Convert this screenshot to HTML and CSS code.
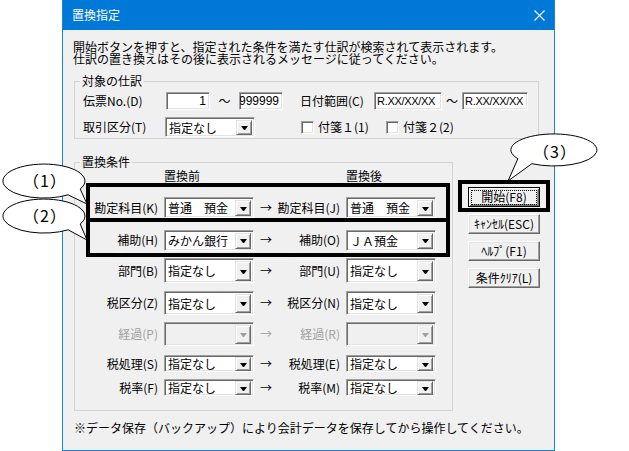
FILE: index.html
```html
<!DOCTYPE html>
<html lang="ja">
<head>
<meta charset="utf-8">
<title>置換指定</title>
<link rel="stylesheet" href="styles.css">
</head>
<body>
<div class="window">
  <div class="titlebar">
    <span class="title">置換指定</span>
    <svg class="close" width="11" height="11" viewBox="0 0 11 11"><path d="M0.5 0.5 L10.5 10.5 M10.5 0.5 L0.5 10.5" stroke="#fff" stroke-width="1.1" fill="none"/></svg>
  </div>
  <div class="client">
    <p class="desc">開始ボタンを押すと、指定された条件を満たす仕訳が検索されて表示されます。<br>仕訳の置き換えはその後に表示されるメッセージに従ってください。</p>

    <fieldset class="group group-target">
      <legend>対象の仕訳</legend>
      <div class="trow">
        <span class="lbl lbl-denpyo">伝票No.(D)</span>
        <span class="edit edit-no">1</span>
        <span class="tilde tilde-no">～</span>
        <span class="edit edit-no">999999</span>
        <span class="lbl lbl-date">日付範囲(C)</span>
        <span class="edit edit-date">R.XX/XX/XX</span>
        <span class="tilde tilde-date">～</span>
        <span class="edit edit-date2">R.XX/XX/XX</span>
      </div>
      <div class="trow">
        <span class="lbl lbl-torihiki">取引区分(T)</span>
        <span class="combo combo-20"><span class="ctext">指定なし</span><span class="cbtn"></span></span>
        <label class="check check-1"><span class="box"></span>付箋１(1)</label>
        <label class="check"><span class="box"></span>付箋２(2)</label>
      </div>
    </fieldset>

    <div class="main">
      <fieldset class="group group-cond">
        <legend>置換条件</legend>
        <div class="cond-grid">
          <span></span><span class="head">置換前</span><span></span><span></span><span class="head">置換後</span>

          <span class="rl">勘定科目(K)</span>
          <span class="combo combo-21"><span class="ctext">普通　預金</span><span class="cbtn"></span></span>
          <span class="arrow">→</span>
          <span class="rl">勘定科目(J)</span>
          <span class="combo combo-21"><span class="ctext">普通　預金</span><span class="cbtn"></span></span>

          <span class="rl">補助(H)</span>
          <span class="combo combo-21"><span class="ctext">みかん銀行</span><span class="cbtn"></span></span>
          <span class="arrow">→</span>
          <span class="rl">補助(O)</span>
          <span class="combo combo-21"><span class="ctext">ＪＡ預金</span><span class="cbtn"></span></span>

          <span class="rl">部門(B)</span>
          <span class="combo combo-25"><span class="ctext">指定なし</span><span class="cbtn"></span></span>
          <span class="arrow">→</span>
          <span class="rl">部門(U)</span>
          <span class="combo combo-25"><span class="ctext">指定なし</span><span class="cbtn"></span></span>

          <span class="rl">税区分(Z)</span>
          <span class="combo combo-24"><span class="ctext">指定なし</span><span class="cbtn"></span></span>
          <span class="arrow">→</span>
          <span class="rl">税区分(N)</span>
          <span class="combo combo-24"><span class="ctext">指定なし</span><span class="cbtn"></span></span>

          <span class="rl disabled">経過(P)</span>
          <span class="combo combo-24 combo-disabled"><span class="ctext"></span><span class="cbtn"></span></span>
          <span class="arrow disabled">→</span>
          <span class="rl disabled">経過(R)</span>
          <span class="combo combo-24 combo-disabled"><span class="ctext"></span><span class="cbtn"></span></span>

          <span class="rl">税処理(S)</span>
          <span class="combo combo-17"><span class="ctext">指定なし</span><span class="cbtn"></span></span>
          <span class="arrow">→</span>
          <span class="rl">税処理(E)</span>
          <span class="combo combo-17"><span class="ctext">指定なし</span><span class="cbtn"></span></span>

          <span class="rl">税率(F)</span>
          <span class="combo combo-17"><span class="ctext">指定なし</span><span class="cbtn"></span></span>
          <span class="arrow">→</span>
          <span class="rl">税率(M)</span>
          <span class="combo combo-17"><span class="ctext">指定なし</span><span class="cbtn"></span></span>
        </div>
      </fieldset>

      <div class="buttons">
        <button class="btn btn-default"><span class="focus">開始(F8)</span></button>
        <button class="btn">ｷｬﾝｾﾙ(ESC)</button>
        <button class="btn">ﾍﾙﾌﾟ(F1)</button>
        <button class="btn">条件ｸﾘｱ(L)</button>
      </div>
    </div>

    <p class="note">※データ保存（バックアップ）により会計データを保存してから操作してください。</p>
  </div>
</div>

<svg class="annot" width="629" height="451" viewBox="0 0 629 451">
  <rect x="88" y="185" width="360" height="35" fill="none" stroke="#000" stroke-width="4"/>
  <rect x="88" y="220" width="360" height="35" fill="none" stroke="#000" stroke-width="4"/>
  <rect x="460" y="182" width="88" height="28" fill="none" stroke="#000" stroke-width="4"/>

  <path d="M80.2 189 A41 17 0 1 0 68.1 194.8 L87 204 Z" fill="#fff" stroke="#000" stroke-width="1"/>
  <text x="45" y="180" class="ctxt">（1）</text>

  <path d="M80.2 224 A41 17 0 1 0 68.1 229.8 L87 240 Z" fill="#fff" stroke="#000" stroke-width="1"/>
  <text x="45" y="215" class="ctxt">（2）</text>

  <path d="M531.9 163.7 A43 16 0 1 0 517.9 158.7 L508 181 Z" fill="#fff" stroke="#000" stroke-width="1"/>
  <text x="555" y="151" class="ctxt">（3）</text>
</svg>
</body>
</html>
```
FILE: styles.css
```css
html, body {
  margin: 0;
  padding: 0;
}
body {
  background: #fff;
  font-family: "Noto Sans CJK JP", "Noto Sans", sans-serif;
  font-size: 12px;
  color: #000;
  line-height: 12px;
}

.window {
  margin-left: 62px;
  width: 493px;
  height: 451px;
  box-sizing: border-box;
  border: 1px solid #1883d7;
  border-top: 0;
  background: #f0f0f0;
  display: flex;
  flex-direction: column;
}

.titlebar {
  height: 30px;
  flex: none;
  background: #0078d7;
  color: #fff;
  display: flex;
  align-items: center;
  justify-content: space-between;
  padding: 0 9px 0 9px;
  box-sizing: border-box;
}
.title {
  font-size: 12px;
  line-height: 12px;
}
.close {
  display: block;
}

.client {
  padding: 11px 15px 0 10px;
}
.desc {
  margin: 0;
  line-height: 12px;
}

/* group boxes */
.group {
  margin: 0 0 0 1px;
  border: 1px solid #d3d3d3;
  min-width: 0;
}
.group legend {
  padding: 0 2px;
  margin-left: -3px;
  line-height: 12px;
}
.group-target {
  margin-top: 10px;
  padding: 4px 0 1px 8px;
}

.trow {
  display: flex;
  align-items: center;
  height: 20px;
}
.trow + .trow {
  margin-top: 6px;
}
.lbl {
  flex: none;
  white-space: nowrap;
}
.lbl-denpyo { width: 83px; }
.lbl-date { width: 74px; margin-left: 17px; }
.lbl-torihiki { width: 82px; }

/* sunken edit */
.edit {
  flex: none;
  height: 18px;
  box-sizing: border-box;
  background: #fff;
  border: 1px solid;
  border-color: #a0a0a0 #fff #fff #a0a0a0;
  box-shadow: inset 1px 1px #696969, inset -1px -1px #e3e3e3;
  display: flex;
  align-items: center;
  padding: 0 3px;
  white-space: nowrap;
  overflow: hidden;
}
.edit-no {
  width: 44px;
  justify-content: flex-end;
  font-family: "Liberation Sans", sans-serif;
  font-size: 12px;
}
.edit-date,
.edit-date2 {
  font-family: "Liberation Sans", sans-serif;
  font-size: 11px;
  padding-left: 2px;
  letter-spacing: -0.3px;
}
.edit-date { width: 68px; }
.edit-date2 { width: 66px; }

.tilde {
  flex: none;
  text-align: center;
}
.tilde-no { width: 29px; }
.tilde-date { width: 20px; }

/* check boxes */
.check {
  display: flex;
  align-items: center;
  white-space: nowrap;
}
.check-1 {
  margin-left: 46px;
  width: 85px;
}
.check .box {
  width: 13px;
  height: 13px;
  box-sizing: border-box;
  background: #fff;
  border: 1px solid;
  border-color: #a0a0a0 #fff #fff #a0a0a0;
  box-shadow: inset 1px 1px #696969, inset -1px -1px #e3e3e3;
  margin-right: 4px;
}

/* combo boxes */
.combo {
  width: 90px;
  box-sizing: border-box;
  background: #fff;
  border: 1px solid;
  border-color: #a0a0a0 #fff #fff #a0a0a0;
  box-shadow: inset 1px 1px #696969, inset -1px -1px #e3e3e3;
  padding: 2px 2px 1px 2px;
  display: flex;
  flex: none;
  justify-self: start;
}
.combo-20 { height: 20px; }
.combo-21 { height: 21px; }
.combo-24 { height: 24px; }
.combo-25 { height: 25px; }
.combo-17 { height: 17px; padding-top: 1px; padding-bottom: 0; }

.ctext {
  flex: 1;
  display: flex;
  align-items: center;
  padding-left: 1px;
  white-space: nowrap;
  line-height: 12px;
}
.cbtn {
  width: 16px;
  flex: none;
  box-sizing: border-box;
  background: #f0f0f0;
  border: 1px solid;
  border-color: #e3e3e3 #696969 #696969 #e3e3e3;
  box-shadow: inset 1px 1px #fff, inset -1px -1px #a0a0a0;
  display: flex;
  align-items: center;
  justify-content: center;
}
.cbtn::after {
  content: "";
  width: 1px;
  height: 0;
  border-left: 3px solid transparent;
  border-right: 3px solid transparent;
  border-top: 4px solid #000;
  margin-top: 1px;
}
.combo-disabled {
  background: #f0f0f0;
}
.combo-disabled .cbtn::after {
  border-top-color: #a0a0a0;
}

/* conditions */
.main {
  display: flex;
  align-items: flex-start;
  margin-top: 17px;
}
.group-cond {
  width: 379px;
  box-sizing: border-box;
  flex: none;
  padding: 2px 0 13px 8px;
}
.cond-grid {
  display: grid;
  grid-template-columns: 81px 96px 12px 74px 90px;
  grid-template-rows: 19px 37px 28px 33px 32px 30px 29px 19px;
  align-items: center;
}
.head {
  align-self: start;
}
.rl {
  text-align: right;
  padding-right: 6px;
  white-space: nowrap;
}
.arrow {
  text-align: left;
}
.disabled {
  color: #a0a0a0;
}

/* buttons */
.buttons {
  display: flex;
  flex-direction: column;
  gap: 7px;
  margin: 31px 0 0 15px;
}
.btn {
  width: 72px;
  height: 20px;
  padding: 0;
  margin: 0;
  font-family: inherit;
  font-size: 12px;
  line-height: 12px;
  color: #000;
  background: #f0f0f0;
  border: 1px solid;
  border-color: #fff #696969 #696969 #fff;
  box-shadow: inset -1px -1px #a0a0a0, inset 1px 1px #e3e3e3;
  display: flex;
  align-items: center;
  justify-content: center;
  white-space: nowrap;
}
.btn-default {
  border: 1px solid #000;
  box-shadow: inset 1px 1px #fff, inset -1px -1px #696969, inset 2px 2px #e3e3e3, inset -2px -2px #a0a0a0;
}
.btn-default .focus {
  display: flex;
  align-items: center;
  justify-content: center;
  width: 64px;
  height: 13px;
  outline: 1px dotted #000;
}

.note {
  margin: 11px 0 0 1px;
  line-height: 12px;
}

/* annotations laid over the dialog */
.annot {
  position: absolute;
  left: 0;
  top: 0;
  pointer-events: none;
}
.ctxt {
  font-family: "Noto Sans CJK JP", sans-serif;
  font-size: 16px;
  letter-spacing: 1px;
  text-anchor: middle;
  dominant-baseline: central;
  fill: #000;
}
```
